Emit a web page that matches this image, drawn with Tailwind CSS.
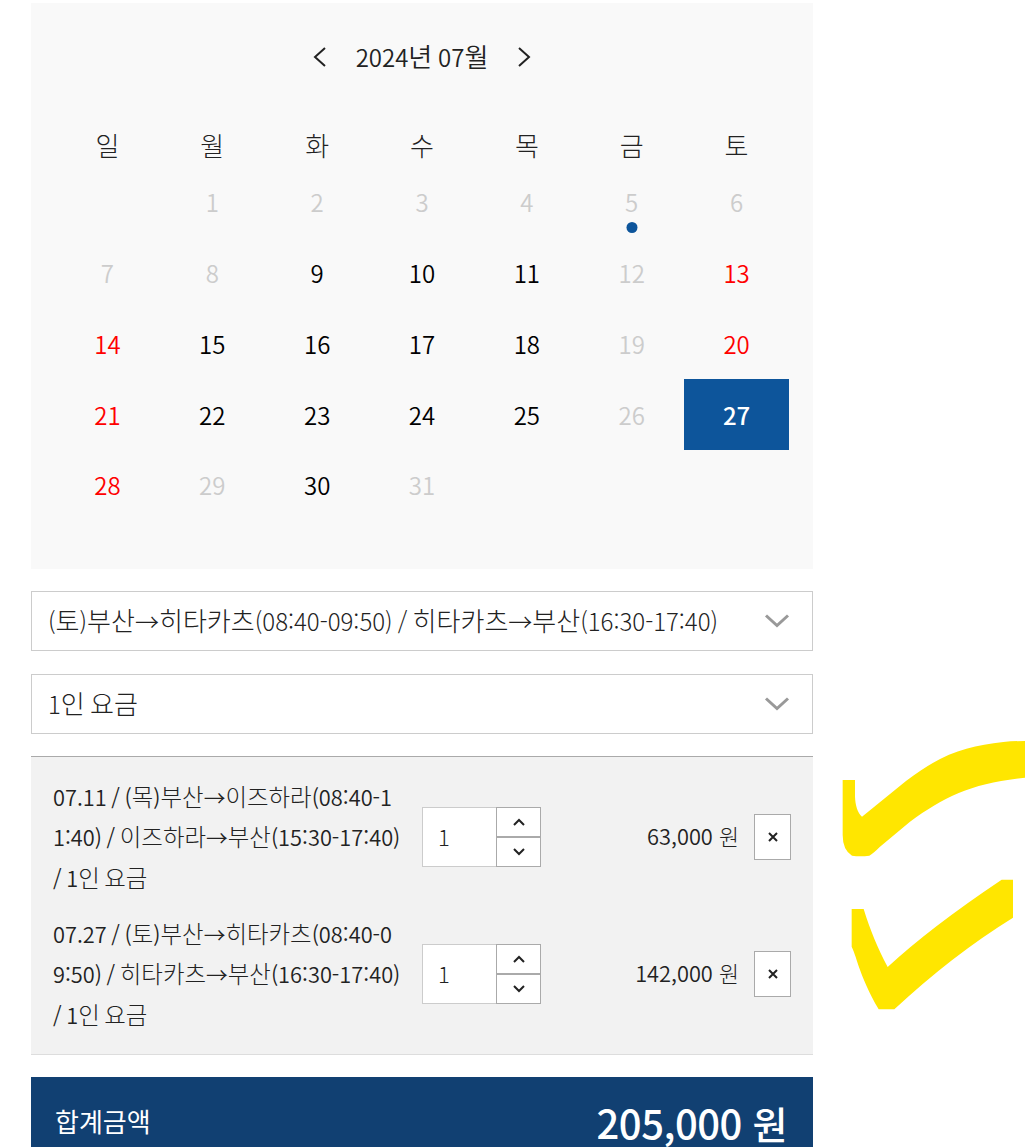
<!DOCTYPE html>
<html lang="ko">
<head>
    <meta charset="UTF-8">
    <meta name="viewport" content="width=device-width, initial-scale=1.0">
    <title>승선권 예약</title>
    <script src="https://cdn.jsdelivr.net/npm/@tailwindcss/browser@4"></script>
</head>
<body class="relative h-[1147px] overflow-hidden bg-white font-['Noto_Sans_CJK_KR',sans-serif] text-[#222]">
    <main class="ml-[31px] w-[782px] pt-[3px]">
        <!-- calendar -->
        <section class="h-[566px] bg-[#f9f9f9] px-6">
            <div class="flex h-[108px] items-center justify-center">
                <button class="flex h-8 w-8 items-center justify-center">
                    <svg class="h-[22px] w-[14px]" viewBox="0 0 14 22" fill="none" stroke="#222" stroke-width="2"><path d="M12 2 2 11l10 9"/></svg>
                </button>
                <h2 class="w-[172px] pb-0.5 text-center text-2xl font-[350] [word-spacing:-1px]"><span data-ko>2024년 07월</span></h2>
                <button class="flex h-8 w-8 items-center justify-center">
                    <svg class="h-[22px] w-[14px]" viewBox="0 0 14 22" fill="none" stroke="#222" stroke-width="2"><path d="m2 2 10 9-10 9"/></svg>
                </button>
            </div>
            <div id="weekdays" class="grid h-[56px] grid-cols-7 pt-[18px] text-[26px] leading-8 font-light"></div>
            <div id="days" class="grid auto-rows-[70.75px] grid-cols-7 text-2xl font-[350]"></div>
        </section>

        <!-- schedule / fare selects -->
        <div class="mt-[22px] flex h-[60px] items-center justify-between border border-[#ccc] pr-[22px] pl-4">
            <span class="pb-0.5 text-2xl font-light whitespace-nowrap [word-spacing:-1.5px]" data-ko>(토)부산→히타카츠(08:40-09:50) / 히타카츠→부산(16:30-17:40)</span>
            <svg class="h-4 w-[26px]" viewBox="0 0 26 16" fill="none" stroke="#999" stroke-width="3"><path d="M2 2.5 13 12.5 24 2.5"/></svg>
        </div>
        <div class="mt-[23px] flex h-[60px] items-center justify-between border border-[#ccc] pr-[22px] pl-4">
            <span class="pb-0.5 text-2xl font-light [word-spacing:-1.5px]" data-ko>1인 요금</span>
            <svg class="h-4 w-[26px]" viewBox="0 0 26 16" fill="none" stroke="#999" stroke-width="3"><path d="M2 2.5 13 12.5 24 2.5"/></svg>
        </div>

        <!-- selected items -->
        <ul id="items" class="mt-[22px] h-[299px] border-t border-b border-t-[#aaa] border-b-[#ddd] bg-[#f2f2f2] pt-[11px]"></ul>

        <!-- total -->
        <div class="mt-[22px] flex h-[90px] items-center justify-between bg-[#114072] pr-[26px] pl-6 text-white">
            <span class="-mt-1 text-[26px]">합계금액</span>
            <strong class="text-[40px] leading-[56px] font-medium tracking-[-0.5px]">205,000 <span class="text-[38px]">원</span></strong>
        </div>
    </main>

    <!-- highlighter marks -->
    <svg class="pointer-events-none absolute top-[730px] left-[830px] h-[290px] w-[197px]" viewBox="0 0 591 870" fill="#ffe600">
        <path d="M38 150H75V200C76 225 82 247 96 260L228 153C340 67 415 48 520 36Q550 33 585 33V143C430 158 345 198 240 275L150 350Q130 370 118 377Q90 381 66 377Q38 360 38 315Z"/>
        <path d="M65 537H101C121 602 143 654 173 711Q300 593 515 449H549V563Q365 677 193 838H146C85 730 84 690 65 650Z"/>
    </svg>

    <script>
        const weekdays = ['일', '월', '화', '수', '목', '금', '토'];
        const open = [9, 10, 11, 15, 16, 17, 18, 22, 23, 24, 25, 30];
        const holiday = [13, 14, 20, 21, 28];
        const selected = 27;
        const today = 5;

        const items = [
            { lines: ['07.11 / (목)부산→이즈하라(08:40-1', '1:40) / 이즈하라→부산(15:30-17:40)', '/ 1인 요금'], qty: 1, price: '63,000' },
            { lines: ['07.27 / (토)부산→히타카츠(08:40-0', '9:50) / 히타카츠→부산(16:30-17:40)', '/ 1인 요금'], qty: 1, price: '142,000' }
        ];

        // Hangul is set a little larger than the digits around it
        function ko(text, cls = 'text-[1.085em]') {
            return text.replace(/[가-힣]+/g, m => `<span class="${cls}">${m}</span>`);
        }

        function dayClass(d) {
            if (d === selected) return 'bg-[#0d559b] text-white font-medium';
            if (holiday.includes(d)) return 'text-[#f00]';
            if (open.includes(d)) return 'text-black';
            return 'text-[#ccc]';
        }

        document.querySelectorAll('[data-ko]').forEach(el => { el.innerHTML = ko(el.textContent); });

        document.getElementById('weekdays').innerHTML = weekdays
            .map(w => `<span class="text-center">${w}</span>`).join('');

        // July 2024 starts on a Monday
        let cells = '<span></span>';
        for (let d = 1; d <= 31; d++) {
            const dot = d === today ? '<i class="absolute bottom-[5px] left-1/2 size-[11px] -translate-x-1/2 rounded-full bg-[#0d559b]"></i>' : '';
            cells += `<span class="relative flex items-center justify-center ${dayClass(d)}">${d}${dot}</span>`;
        }
        document.getElementById('days').innerHTML = cells;

        document.getElementById('items').innerHTML = items.map(it => `
            <li class="flex h-[137px] items-center pr-[22px] pl-[22px]">
                <p class="w-[369px] text-[21.8px] leading-[40.5px] font-[350] whitespace-nowrap [word-spacing:-1.5px]">${it.lines.map(l => `<span class="block h-[40.5px]">${ko(l, 'text-[1.075em] font-light')}</span>`).join('')}</p>
                <div class="flex h-[60px] w-[119px]">
                    <span class="flex w-[74px] items-center border border-r-0 border-[#ccc] bg-white pl-[15px] text-[22px] font-light">${it.qty}</span>
                    <div class="flex w-[45px] flex-col">
                        <button class="flex h-[30px] items-center justify-center border border-[#aaa] bg-white">
                            <svg class="mt-px h-2 w-3" viewBox="0 0 12 8" fill="none" stroke="#222" stroke-width="2"><path d="M1 7 6 2l5 5"/></svg>
                        </button>
                        <button class="flex h-[30px] items-center justify-center border border-[#aaa] bg-white">
                            <svg class="mt-px h-2 w-3" viewBox="0 0 12 8" fill="none" stroke="#222" stroke-width="2"><path d="m1 1 5 5 5-5"/></svg>
                        </button>
                    </div>
                </div>
                <span class="w-[198px] text-right text-[21.8px] font-[350]">${ko(it.price + ' 원', 'font-light')}</span>
                <button class="ml-[15px] flex h-[46px] w-[37px] items-center justify-center border border-[#aaa] bg-white">
                    <svg class="mt-px size-[10px]" viewBox="0 0 10 10" fill="none" stroke="#222" stroke-width="2"><path d="m1 1 8 8M9 1 1 9"/></svg>
                </button>
            </li>`).join('');
    </script>
</body>
</html>
